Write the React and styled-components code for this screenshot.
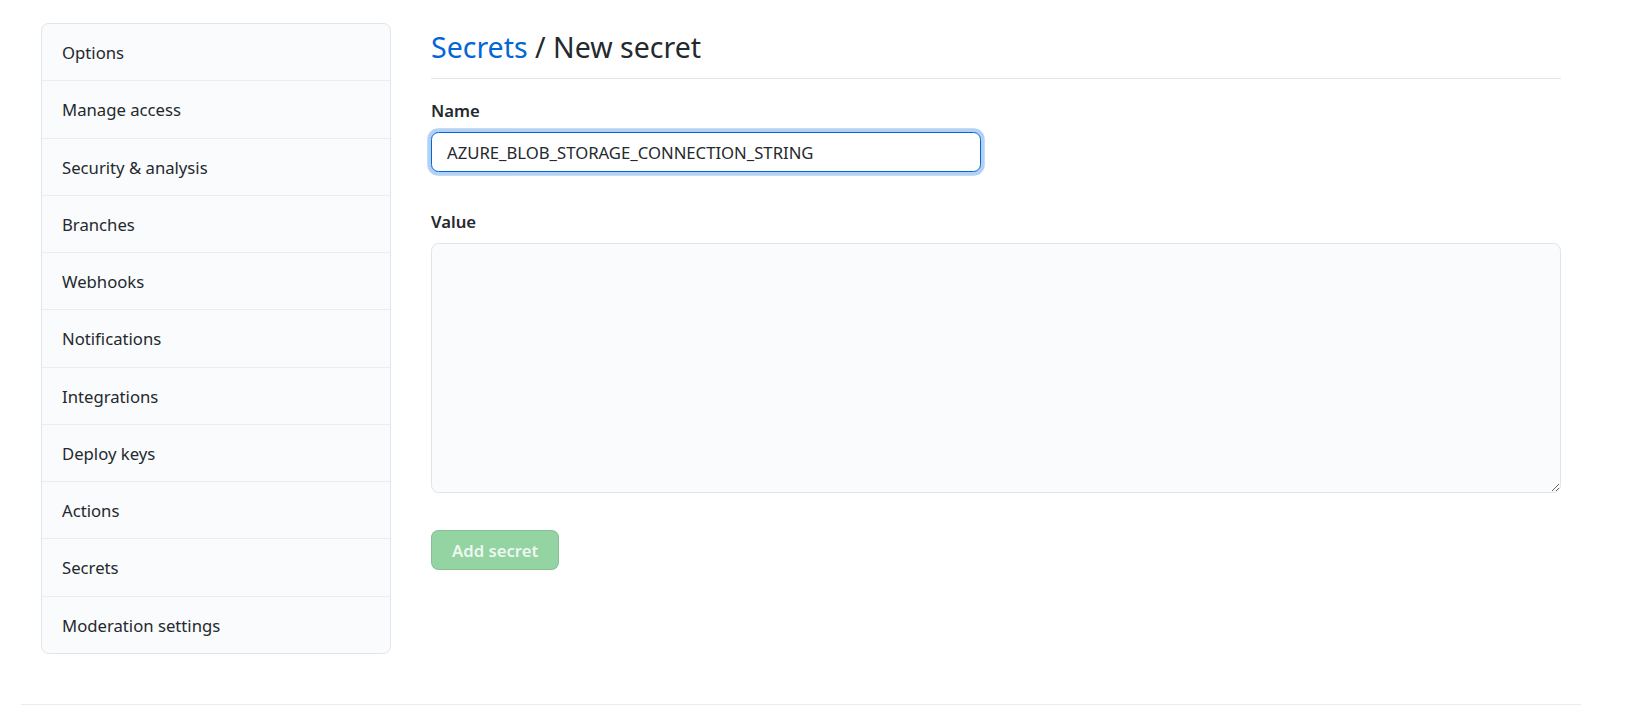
import React from "react";
import styled, { createGlobalStyle } from "styled-components";

const Global = createGlobalStyle`
  html, body { margin: 0; padding: 0; background: #fff; }
  body {
    font-family: "Noto Sans", "Segoe UI", "Liberation Sans", sans-serif;
    color: #24292e;
    font-size: 16.7px;
  }
  * { box-sizing: border-box; }
`;

const Page = styled.div`
  width: 1633px;
  height: 711px;
  overflow: hidden;
  display: flex;
  flex-direction: column;
`;

const Layout = styled.div`
  display: flex;
  gap: 40px;
  padding: 23px 0 0 41px;
`;

const Sidebar = styled.nav`
  width: 350px;
  flex: none;
  align-self: flex-start;
  background: #fafbfc;
  border: 1px solid #e1e4e8;
  border-radius: 7.5px;
  overflow: hidden;
`;

const MenuItem = styled.a`
  display: block;
  padding: 16px 20px 14px;
  line-height: 26.25px;
  font-size: 16.7px;
  color: #24292e;
  text-decoration: none;
  border-bottom: 1px solid #eaecef;
  &:last-child { border-bottom: none; }
`;

const Main = styled.main`
  width: 1130px;
  flex: none;
`;

const Subhead = styled.div`
  border-bottom: 1px solid #e1e4e8;
  padding-top: 2px;
  padding-bottom: 8px;
  margin-bottom: 19px;
`;

const Heading = styled.h2`
  margin: 0;
  font-size: 28.5px;
  line-height: 45px;
  font-weight: 400;
  color: #24292e;
`;

const Crumb = styled.a`
  color: #0366d6;
  text-decoration: none;
`;

const Field = styled.div`
  margin-bottom: ${(p) => p.$mb || 0}px;
`;

const Label = styled.label`
  display: block;
  font-weight: 600;
  font-size: 16.7px;
  line-height: 26px;
  margin-bottom: 8px;
`;

const TextInput = styled.input`
  display: block;
  width: 550px;
  height: 40px;
  padding: 0 15px;
  font-family: inherit;
  font-size: 16.7px;
  color: #24292e;
  background: #fff;
  border: 1px solid #0366d6;
  border-radius: 7.5px;
  box-shadow: 0 0 0 3.75px rgba(3, 102, 214, 0.3);
  outline: none;
`;

const TextArea = styled.textarea`
  display: block;
  width: 1130px;
  height: 250px;
  padding: 10px 15px;
  font-family: inherit;
  font-size: 16.7px;
  background: #fafbfc;
  border: 1px solid #e1e4e8;
  border-radius: 7.5px;
  resize: vertical;
  outline: none;
`;

const Button = styled.button`
  display: block;
  height: 40px;
  padding: 0 20px;
  font-family: inherit;
  font-size: 16.7px;
  font-weight: 600;
  color: rgba(255, 255, 255, 0.85);
  background: #94d3a2;
  border: 1px solid rgba(27, 31, 35, 0.1);
  border-radius: 7.5px;
  cursor: default;
`;

const Footer = styled.footer`
  margin: auto 0 6px 21px;
  width: 1560px;
  border-top: 1px solid #eaecef;
`;

const items = [
  "Options",
  "Manage access",
  "Security & analysis",
  "Branches",
  "Webhooks",
  "Notifications",
  "Integrations",
  "Deploy keys",
  "Actions",
  "Secrets",
  "Moderation settings",
];

export default function App() {
  return (
    <Page>
      <Global />
      <Layout>
        <Sidebar>
          {items.map((t) => (
            <MenuItem key={t} href="#">{t}</MenuItem>
          ))}
        </Sidebar>
        <Main>
          <Subhead>
            <Heading>
              <Crumb href="#">Secrets</Crumb> / New secret
            </Heading>
          </Subhead>
          <Field $mb={37}>
            <Label>Name</Label>
            <TextInput defaultValue="AZURE_BLOB_STORAGE_CONNECTION_STRING" />
          </Field>
          <Field $mb={37}>
            <Label>Value</Label>
            <TextArea />
          </Field>
          <Button>Add secret</Button>
        </Main>
      </Layout>
      <Footer />
    </Page>
  );
}
